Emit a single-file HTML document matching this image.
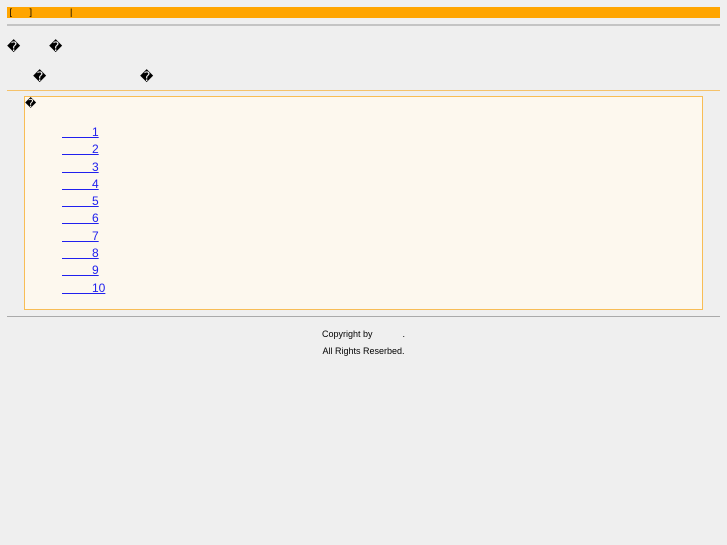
<!DOCTYPE html>
<html><head><meta charset="utf-8"><style>
body{margin:0;width:727px;height:545px;background:#efefef;font-family:"Liberation Sans",sans-serif;position:relative;overflow:hidden}
.a{position:absolute}
.d{font-size:13px;color:#000;line-height:1}
a{color:#2020ee;text-decoration:underline;font-size:12px}
</style></head><body>
<div class="a" style="left:7px;top:7px;width:713px;height:11px;background:#ffa500;font-size:9px;line-height:11px;color:#000">&nbsp;[&nbsp;&nbsp;&nbsp;&nbsp;&nbsp;&nbsp;&nbsp;]<span style="margin-left:38px">|</span></div>
<div class="a" style="left:7px;top:24px;width:713px;height:2px;background:#c4c4c4"></div>
<div class="a d" style="left:7px;top:40px">�</div>
<div class="a d" style="left:49px;top:40px">�</div>
<div class="a d" style="left:33px;top:70px">�</div>
<div class="a d" style="left:140px;top:70px">�</div>
<div class="a" style="left:7px;top:90px;width:713px;height:1px;background:#f5c26a"></div>
<div class="a" style="left:24px;top:96px;width:677px;height:212px;border:1px solid #f8bd55;background:#fdf8ee"></div>
<div class="a" style="left:25px;top:97px;font-size:11px">�</div>
<div class="a" style="left:62px;top:124px;font-size:12px;line-height:17.3px;white-space:pre"><a>         1</a><br><a>         2</a><br><a>         3</a><br><a>         4</a><br><a>         5</a><br><a>         6</a><br><a>         7</a><br><a>         8</a><br><a>         9</a><br><a>         10</a></div>
<div class="a" style="left:7px;top:316px;width:713px;height:1px;background:#aaa"></div>
<div class="a" style="left:0;top:326px;width:727px;text-align:center;font-size:9px;line-height:17px;color:#000">Copyright by &nbsp;&nbsp;&nbsp;&nbsp;&nbsp;&nbsp;&nbsp;&nbsp;&nbsp;&nbsp;&nbsp;.<br>All Rights Reserbed.</div>
</body></html>
